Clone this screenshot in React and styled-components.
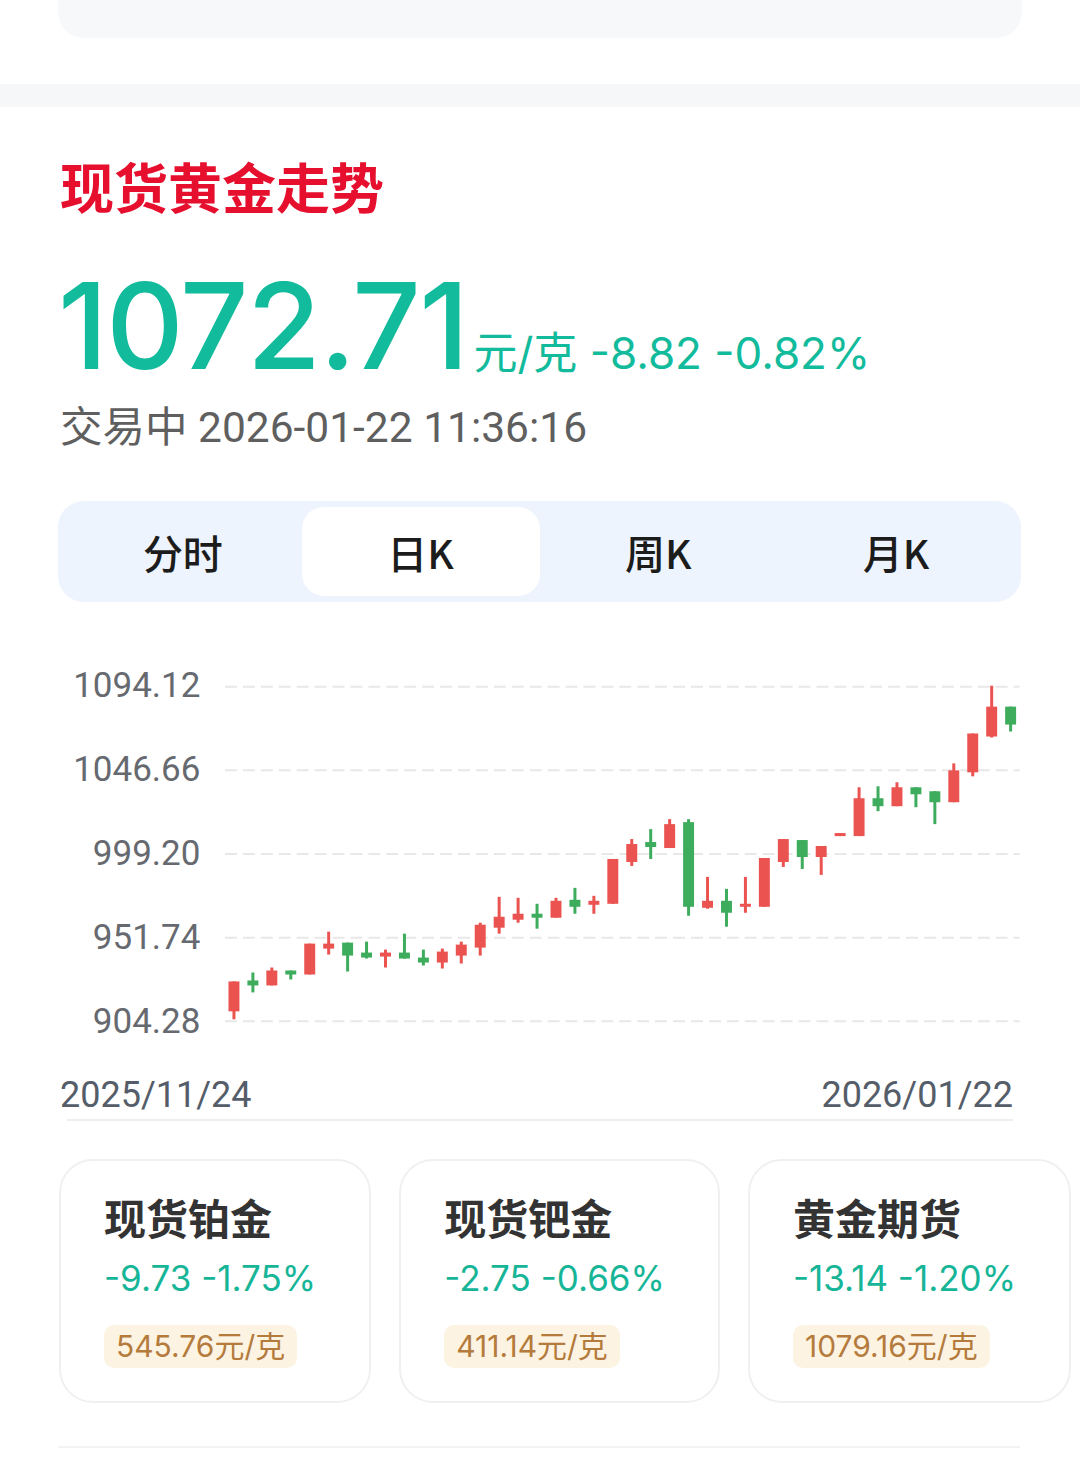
import React from 'react';
import styled, { createGlobalStyle } from 'styled-components';

const GlobalStyle = createGlobalStyle`
  html, body { margin: 0; padding: 0; background: #ffffff; }
  body { font-family: "Noto Sans CJK SC", "Noto Sans", sans-serif; }
  * { box-sizing: border-box; }
`;

const NUM = `"Inter", "Noto Sans CJK SC", sans-serif`;
const PLAIN = `"Roboto", "Noto Sans CJK SC", sans-serif`;
const TEAL = '#12bb9c';
const UP = '#ea5350';
const DOWN = '#3dac5c';

const Page = styled.div`
  width: 1080px;
  height: 1483px;
  overflow: hidden;
  background: #ffffff;
  display: flex;
  flex-direction: column;
`;

const PrevCard = styled.div`
  margin: 0 58px;
  height: 38px;
  background: #f7f8fa;
  border-radius: 0 0 26px 26px;
`;

const Band = styled.div`
  margin-top: 46px;
  height: 23px;
  background: #f6f7f9;
`;

const Section = styled.section`
  padding: 0 58px 0 60px;
  display: flex;
  flex-direction: column;
`;

const Title = styled.h2`
  margin: 47px 0 0;
  font-size: 54px;
  line-height: 64px;
  font-weight: 700;
  color: #e60f2d;
`;

const PriceRow = styled.div`
  margin-top: 48px;
  display: flex;
  align-items: baseline;
  line-height: 120px;
  height: 120px;
`;

const BigPrice = styled.span`
  font-family: ${NUM};
  font-size: 120px;
  font-weight: 500;
  letter-spacing: -1.5px;
  color: ${TEAL};
  margin-left: -2px;
`;

const PriceMeta = styled.span`
  font-family: ${NUM};
  font-size: 44px;
  color: ${TEAL};
  margin-left: 6px;
  white-space: pre;
`;

const StatusLine = styled.div`
  margin-top: 16px;
  font-family: ${PLAIN};
  font-size: 42.5px;
  line-height: 52px;
  color: #5f5f5f;
`;

const Tabs = styled.div`
  margin-top: 47px;
  height: 101px;
  padding: 6px;
  margin-left: -2px;
  margin-right: 1px;
  border-radius: 26px;
  background: #eef4fd;
  display: grid;
  grid-template-columns: repeat(4, 1fr);
`;

const Tab = styled.div`
  display: flex;
  align-items: center;
  justify-content: center;
  border-radius: 22px;
  font-size: 40px;
  font-weight: 500;
  color: #1c1c1c;
  background: ${(p) => (p.$active ? '#ffffff' : 'transparent')};
`;

const ChartRow = styled.div`
  margin-top: 42px;
  display: flex;
  gap: 23px;
  height: 420px;
`;

const AxisCol = styled.div`
  width: 141px;
  display: flex;
  flex-direction: column;
`;

const AxisLabel = styled.div`
  height: 84px;
  line-height: 84px;
  text-align: right;
  font-family: ${PLAIN};
  font-size: 35px;
  color: #666a70;
`;

const XLabels = styled.div`
  margin-top: 9px;
  padding-right: 9px;
  display: flex;
  justify-content: space-between;
  font-family: ${PLAIN};
  font-size: 36px;
  line-height: 44px;
  color: #555d69;
`;

const AxisLine = styled.div`
  margin: 2px 9px 0 7px;
  height: 2px;
  background: #eceef2;
`;

const CardsRow = styled.div`
  margin-top: 38px;
  margin-left: -1px;
  margin-right: -58px;
  display: flex;
  gap: 28px;
  overflow: hidden;
`;

const Card = styled.div`
  flex: none;
  height: 244px;
  border: 2px solid #f0f0f0;
  border-radius: 34px;
  padding: 28px 53px 0 43px;
  display: flex;
  flex-direction: column;
  align-items: flex-start;
`;

const CardTitle = styled.div`
  font-size: 42px;
  line-height: 56px;
  font-weight: 700;
  color: #333333;
`;

const CardChange = styled.div`
  margin-top: 8px;
  font-family: ${NUM};
  font-size: 35px;
  line-height: 50px;
  color: #16b597;
  white-space: pre;
`;

const Chip = styled.div`
  margin-top: 22px;
  height: 43px;
  padding: 0 12px;
  border-radius: 10px;
  background: #fdf3e2;
  color: #b47b3c;
  font-family: ${NUM};
  font-size: 30px;
  line-height: 43px;
`;

const BottomLine = styled.div`
  margin: 43px 2px 0 -2px;
  height: 2px;
  background: #f2f3f5;
`;

// [bodyTop, bodyBottom, wickTop, wickBottom, rising] in page pixel rows
const CANDLES = [
  [982, 1012, 982, 1020, 1], [981, 986, 973, 993, 0], [971, 986, 968, 986, 1],
  [971, 975, 971, 980, 0], [944, 975, 944, 975, 1], [944, 949, 932, 955, 1],
  [943, 956, 943, 972, 0], [953, 958, 942, 959, 0], [953, 957, 950, 968, 1],
  [953, 959, 934, 959, 0], [958, 963, 950, 966, 0], [952, 963, 949, 969, 1],
  [945, 956, 942, 964, 1], [925, 948, 923, 956, 1], [917, 928, 897, 934, 1],
  [914, 920, 898, 923, 1], [914, 918, 904, 929, 0], [901, 918, 898, 918, 1],
  [900, 907, 888, 914, 0], [901, 905, 896, 914, 1], [859, 904, 859, 904, 1],
  [844, 862, 839, 866, 1], [842, 847, 829, 859, 0], [824, 848, 819, 848, 1],
  [822, 907, 819, 916, 0], [901, 908, 877, 909, 1], [901, 913, 889, 927, 0],
  [904, 907, 877, 913, 1], [858, 907, 858, 907, 1], [839, 862, 839, 867, 1],
  [840, 857, 840, 869, 0], [846, 857, 846, 875, 1], [833, 836, 833, 836, 1],
  [798, 836, 787, 836, 1], [798, 806, 786, 811, 0], [787, 806, 782, 806, 1],
  [787, 794, 787, 807, 0], [791, 802, 791, 824, 0], [770, 802, 763, 802, 1],
  [733, 772, 733, 776, 1], [706, 736, 685, 737, 1], [706, 724, 706, 731, 0],
];

const AXIS = ['1094.12', '1046.66', '999.20', '951.74', '904.28'];
const CHART_TOP = 644;

function KChart() {
  return (
    <svg width="802" height="420" viewBox="0 0 802 420">
      {AXIS.map((_, k) => (
        <line
          key={k}
          x1="2"
          x2="800"
          y1={42 + k * 84}
          y2={42 + k * 84}
          stroke="#e8e8e8"
          strokeWidth="2"
          strokeDasharray="12 6"
        />
      ))}
      {CANDLES.map(([bt, bb, wt, wb, rising], i) => {
        const cx = 11 + i * 19.024;
        const color = rising ? UP : DOWN;
        return (
          <g key={i} fill={color}>
            <rect x={cx - 1.5} y={wt - CHART_TOP} width="3" height={Math.max(wb - wt, 2)} />
            <rect x={cx - 5.5} y={bt - CHART_TOP} width="11" height={Math.max(bb - bt, 3)} />
          </g>
        );
      })}
    </svg>
  );
}

const TABS = ['分时', '日K', '周K', '月K'];
const METALS = [
  { name: '现货铂金', change: '-9.73 -1.75%', price: '545.76元/克' },
  { name: '现货钯金', change: '-2.75 -0.66%', price: '411.14元/克' },
  { name: '黄金期货', change: '-13.14 -1.20%', price: '1079.16元/克' },
];

export default function App() {
  return (
    <Page>
      <GlobalStyle />
      <PrevCard />
      <Band />
      <Section>
        <Title>现货黄金走势</Title>
        <PriceRow>
          <BigPrice>1072.71</BigPrice>
          <PriceMeta>元/克 -8.82 -0.82%</PriceMeta>
        </PriceRow>
        <StatusLine>交易中 2026-01-22 11:36:16</StatusLine>
        <Tabs>
          {TABS.map((t, i) => (
            <Tab key={t} $active={i === 1}>{t}</Tab>
          ))}
        </Tabs>
        <ChartRow>
          <AxisCol>
            {AXIS.map((a) => (
              <AxisLabel key={a}>{a}</AxisLabel>
            ))}
          </AxisCol>
          <KChart />
        </ChartRow>
        <XLabels>
          <span>2025/11/24</span>
          <span>2026/01/22</span>
        </XLabels>
        <AxisLine />
        <CardsRow>
          {METALS.map((m) => (
            <Card key={m.name}>
              <CardTitle>{m.name}</CardTitle>
              <CardChange>{m.change}</CardChange>
              <Chip>{m.price}</Chip>
            </Card>
          ))}
        </CardsRow>
        <BottomLine />
      </Section>
    </Page>
  );
}
